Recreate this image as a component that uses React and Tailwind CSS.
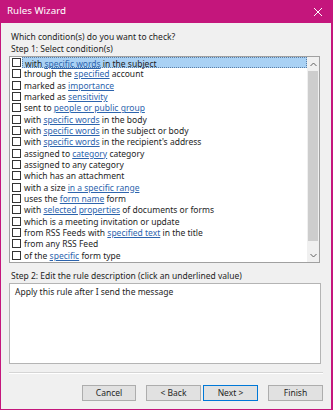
import React from "react";

const F = { fontFamily: '"Noto Sans", "DejaVu Sans", sans-serif' };

const rows = [
  ["with ", "specific words", " in the subject"],
  ["through the ", "specified", " account"],
  ["marked as ", "importance", ""],
  ["marked as ", "sensitivity", ""],
  ["sent to ", "people or public group", ""],
  ["with ", "specific words", " in the body"],
  ["with ", "specific words", " in the subject or body"],
  ["with ", "specific words", " in the recipient's address"],
  ["assigned to ", "category", " category"],
  ["assigned to any category", "", ""],
  ["which has an attachment", "", ""],
  ["with a size ", "in a specific range", ""],
  ["uses the ", "form name", " form"],
  ["with ", "selected properties", " of documents or forms"],
  ["which is a meeting invitation or update", "", ""],
  ["from RSS Feeds with ", "specified text", " in the title"],
  ["from any RSS Feed", "", ""],
  ["of the ", "specific", " form type"],
];

function Row({ r, selected }) {
  return (
    <div className="flex items-center h-[11.33px] pl-[2px]">
      <div className="w-[9px] h-[9px] border border-[#333] bg-white shrink-0" />
      <div
        className={
          "ml-[1px] pl-[2px] h-full whitespace-pre leading-[11px] " +
          (selected
            ? "flex-1 bg-[#a9d1f4] border border-dotted border-[#5a7ea6] leading-[9px]"
            : "")
        }
      >
        {r[0]}
        {r[1] && (
          <span className="text-[#2d64ad] underline decoration-[0.5px] underline-offset-[1px]">
            {r[1]}
          </span>
        )}
        {r[2]}
      </div>
    </div>
  );
}

export default function App() {
  return (
    <div
      className="w-[333px] h-[410px] bg-[#f0f0f0] border-l border-r-2 border-b border-[#c4167c] flex flex-col text-[#1e1e1e] overflow-hidden"
      style={F}
    >
      <div className="h-[23px] bg-[#c4167c] flex items-center justify-between pl-[6px] pr-[8px] shrink-0">
        <span className="text-white text-[9.8px]">Rules Wizard</span>
        <svg width="10" height="10" viewBox="0 0 10 10">
          <path d="M1 1 L9 9 M9 1 L1 9" stroke="#ffffff" strokeWidth="1" />
        </svg>
      </div>
      <div className="flex flex-col px-[8px] text-[8.5px]">
        <div className="h-[12px] mt-[8px] flex items-center pl-[2px]">
          Which condition(s) do you want to check?
        </div>
        <div className="h-[13px] flex items-center pl-[2px]">
          Step 1: Select condition(s)
        </div>
        <div className="w-[311px] h-[207px] bg-white border border-[#a0a0a0] flex">
          <div className="flex-1 flex flex-col min-w-0 overflow-hidden">
            {rows.map((r, i) => (
              <Row key={i} r={r} selected={i === 0} />
            ))}
          </div>
          <div className="w-[12px] bg-[#f0f0f0] flex flex-col items-center shrink-0">
            <div className="h-[14px] flex items-center justify-center">
              <svg width="7" height="5" viewBox="0 0 7 5">
                <path d="M0.5 4 L3.5 1 L6.5 4" stroke="#606060" fill="none" strokeWidth="1" />
              </svg>
            </div>
            <div className="w-[10px] h-[170px] bg-[#cdcdcd]" />
            <div className="flex-1" />
            <div className="h-[14px] flex items-center justify-center">
              <svg width="7" height="5" viewBox="0 0 7 5">
                <path d="M0.5 1 L3.5 4 L6.5 1" stroke="#606060" fill="none" strokeWidth="1" />
              </svg>
            </div>
          </div>
        </div>
        <div className="h-[13px] mt-[7px] flex items-center pl-[2px]">
          Step 2: Edit the rule description (click an underlined value)
        </div>
        <div className="w-[312px] h-[81px] bg-white border border-[#b4b4b4] pl-[5px] pt-[2px]">
          Apply this rule after I send the message
        </div>
        <div className="w-[314px] mt-[8px] h-[2px] border-t border-[#d5d5d5] border-b border-b-white" />
        <div className="flex justify-end mt-[11px] w-[314px]">
          <button className="w-[54px] h-[16px] bg-[#e1e1e1] border border-[#adadad] text-[8.5px] flex items-center justify-center">
            Cancel
          </button>
          <button className="w-[55px] h-[16px] ml-[10px] bg-[#e1e1e1] border border-[#adadad] text-[8.5px] flex items-center justify-center">
            &lt; Back
          </button>
          <button className="w-[55px] h-[16px] ml-[2px] bg-[#e1e1e1] border border-[#0078d7] text-[8.5px] flex items-center justify-center">
            Next &gt;
          </button>
          <button className="w-[55px] h-[16px] ml-[10px] bg-[#e1e1e1] border border-[#adadad] text-[8.5px] flex items-center justify-center">
            Finish
          </button>
        </div>
      </div>
    </div>
  );
}
